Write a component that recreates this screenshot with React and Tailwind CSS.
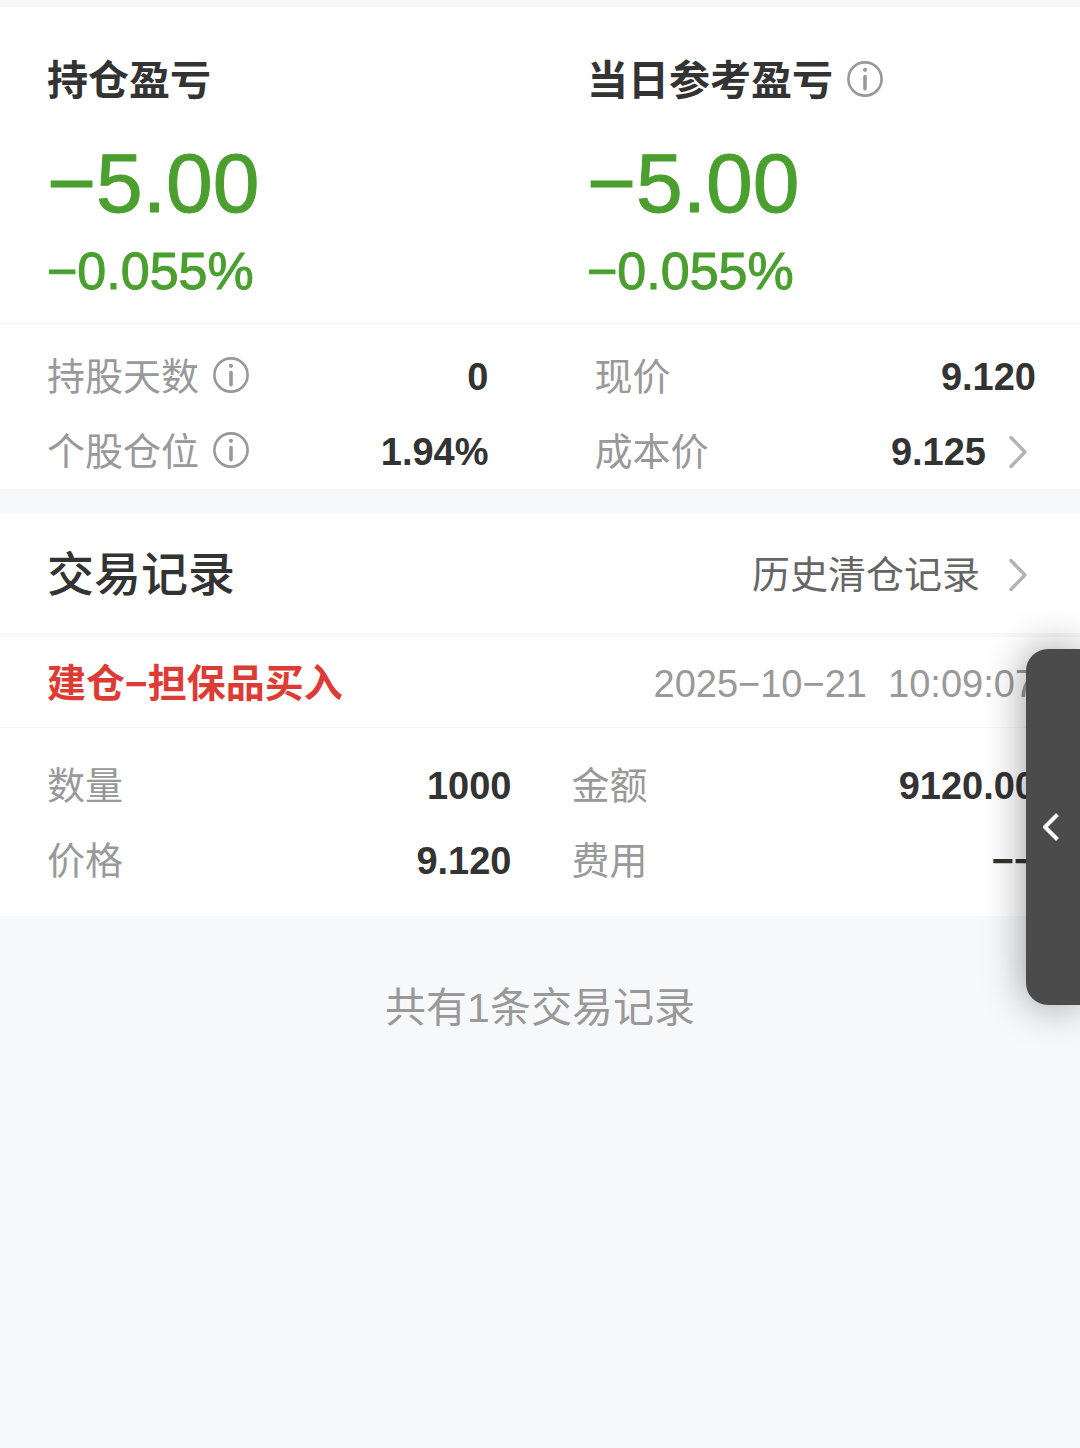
import React from "react";

const holdingRows = [
  { label: "持股天数", value: "0", info: true },
  { label: "个股仓位", value: "1.94%", info: true },
];

const priceRows = [
  { label: "现价", value: "9.120" },
  { label: "成本价", value: "9.125", link: true },
];

const tradeLeft = [
  { label: "数量", value: "1000" },
  { label: "价格", value: "9.120" },
];

const tradeRight = [
  { label: "金额", value: "9120.00" },
  { label: "费用", value: "−−" },
];

function InfoButton({ label }) {
  return (
    <button type="button" aria-label={label} className="mb-1 shrink-0 text-[#999999]">
      <svg viewBox="0 0 36 36" className="size-9" fill="none" stroke="currentColor">
        <circle cx="18" cy="18" r="16.6" strokeWidth="2.6" />
        <circle cx="18" cy="8.8" r="2.1" fill="currentColor" stroke="none" />
        <path d="M18 15.6V27.8" strokeWidth="3.6" strokeLinecap="round" />
      </svg>
    </button>
  );
}

function ChevronRight() {
  return (
    <svg viewBox="0 0 20 34" className="h-[34px] w-5 shrink-0" fill="none" stroke="#b3b3b3">
      <path d="M3 2.5L17 17L3 31.5" strokeWidth="3.4" strokeLinecap="round" strokeLinejoin="round" />
    </svg>
  );
}

function Summary({ title, amount, percent, info }) {
  return (
    <div className="flex-1 pl-[47px]">
      <div className="flex h-12 items-center gap-[14px]">
        <h2 className="text-[41px] leading-12 font-bold">{title}</h2>
        {info && <InfoButton label={title + "说明"} />}
      </div>
      <p className="mt-[30px] text-[84px] leading-24 text-[#4a9f2f] [-webkit-text-stroke:1px]">{amount}</p>
      <p className="mt-2 text-[52px] leading-16 text-[#4a9f2f] [-webkit-text-stroke:1px]">{percent}</p>
    </div>
  );
}

function Rows({ rows }) {
  return (
    <dl className="flex-1">
      {rows.map((row) => (
        <div key={row.label} className="flex h-[75px] items-center justify-between">
          <dt className="flex items-center gap-[14px] text-[38px] leading-12 text-[#999999]">
            {row.label}
            {row.info && <InfoButton label={row.label + "说明"} />}
          </dt>
          <dd className="flex items-center text-[38px] leading-12 font-bold">
            {row.link ? (
              <a href="#cost" className="flex items-center gap-[22px] pr-2">
                {row.value}
                <ChevronRight />
              </a>
            ) : (
              row.value
            )}
          </dd>
        </div>
      ))}
    </dl>
  );
}

function App() {
  return (
    <div className="relative min-h-screen overflow-hidden bg-[#f7f8fa] pt-[7px] font-['Liberation_Sans','Noto_Sans_CJK_SC',sans-serif] text-[#333333]">
      <section className="bg-white">
        <div className="flex border-b border-[#f5f5f6] pt-[50px] pb-5">
          <Summary title="持仓盈亏" amount="−5.00" percent="−0.055%" />
          <Summary title="当日参考盈亏" amount="−5.00" percent="−0.055%" info />
        </div>
        <div className="flex gap-[106px] pt-[15px] pr-11 pl-[47px]">
          <Rows rows={holdingRows} />
          <Rows rows={priceRows} />
        </div>
      </section>

      <section className="mt-6 bg-white">
        <div className="flex h-[124px] items-center justify-between border-b-4 border-[#f7f8fa] pt-1 pr-[52px] pl-[47px]">
          <h2 className="text-[47px] leading-16 font-medium">交易记录</h2>
          <a href="#history" className="flex items-center gap-[28px] text-[38px] leading-12 text-[#666666]">
            历史清仓记录
            <ChevronRight />
          </a>
        </div>
        <div className="flex h-[91px] items-center justify-between border-b border-[#f5f5f6] pt-1 pr-11 pl-[47px]">
          <h3 className="text-[39px] leading-12 font-bold text-[#dd3c34]">建仓−担保品买入</h3>
          <time className="text-[38px] leading-12 text-[#999999]">2025−10−21&nbsp; 10:09:07</time>
        </div>
        <div className="flex gap-[60px] pt-5 pr-11 pb-[18px] pl-[47px]">
          <Rows rows={tradeLeft} />
          <Rows rows={tradeRight} />
        </div>
      </section>

      <p className="mt-16 text-center text-[41px] leading-14 text-[#999999]">共有1条交易记录</p>

      {/* side drawer handle */}
      <button
        type="button"
        aria-label="展开"
        className="absolute top-[649px] right-0 flex h-[356px] w-[54px] items-center rounded-l-[22px] bg-[#4b4b4b] pl-[15px] shadow-[0_0_40px_rgba(0,0,0,0.4)]"
      >
        <svg viewBox="0 0 20 30" className="h-[30px] w-5" fill="none" stroke="#ffffff">
          <path d="M16.5 2.5L4 15L16.5 27.5" strokeWidth="4" strokeLinejoin="round" />
        </svg>
      </button>
    </div>
  );
}

export default App;
